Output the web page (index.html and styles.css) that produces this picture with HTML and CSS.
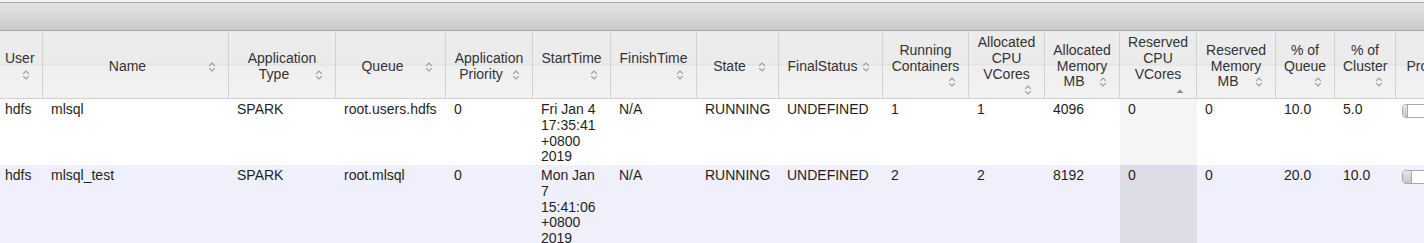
FILE: index.html
```html
<!DOCTYPE html>
<html lang="en">
<head>
<meta charset="utf-8">
<title>Applications</title>
<link rel="stylesheet" href="styles.css">
</head>
<body>
<div class="page">
  <div class="toolbar"></div>
  <div class="scroller">
    <table class="apps">
      <thead>
        <tr>
          <th class="w-user">User<span class="sort"><svg viewBox="0 0 16 16"><path d="M5.2 6.8 8 4 10.8 6.8M5.2 9.2 8 12 10.8 9.2"/></svg></span></th>
          <th class="w-name">Name<span class="sort"><svg viewBox="0 0 16 16"><path d="M5.2 6.8 8 4 10.8 6.8M5.2 9.2 8 12 10.8 9.2"/></svg></span></th>
          <th class="w-type">Application Type<span class="sort"><svg viewBox="0 0 16 16"><path d="M5.2 6.8 8 4 10.8 6.8M5.2 9.2 8 12 10.8 9.2"/></svg></span></th>
          <th class="w-queue">Queue<span class="sort"><svg viewBox="0 0 16 16"><path d="M5.2 6.8 8 4 10.8 6.8M5.2 9.2 8 12 10.8 9.2"/></svg></span></th>
          <th class="w-prio">Application Priority<span class="sort"><svg viewBox="0 0 16 16"><path d="M5.2 6.8 8 4 10.8 6.8M5.2 9.2 8 12 10.8 9.2"/></svg></span></th>
          <th class="w-start">StartTime<span class="sort"><svg viewBox="0 0 16 16"><path d="M5.2 6.8 8 4 10.8 6.8M5.2 9.2 8 12 10.8 9.2"/></svg></span></th>
          <th class="w-finish">FinishTime<span class="sort"><svg viewBox="0 0 16 16"><path d="M5.2 6.8 8 4 10.8 6.8M5.2 9.2 8 12 10.8 9.2"/></svg></span></th>
          <th class="w-state">State<span class="sort"><svg viewBox="0 0 16 16"><path d="M5.2 6.8 8 4 10.8 6.8M5.2 9.2 8 12 10.8 9.2"/></svg></span></th>
          <th class="w-final">FinalStatus<span class="sort"><svg viewBox="0 0 16 16"><path d="M5.2 6.8 8 4 10.8 6.8M5.2 9.2 8 12 10.8 9.2"/></svg></span></th>
          <th class="w-run">Running Containers<span class="sort"><svg viewBox="0 0 16 16"><path d="M5.2 6.8 8 4 10.8 6.8M5.2 9.2 8 12 10.8 9.2"/></svg></span></th>
          <th class="w-acpu">Allocated CPU VCores<span class="sort"><svg viewBox="0 0 16 16"><path d="M5.2 6.8 8 4 10.8 6.8M5.2 9.2 8 12 10.8 9.2"/></svg></span></th>
          <th class="w-amem">Allocated Memory MB<span class="sort"><svg viewBox="0 0 16 16"><path d="M5.2 6.8 8 4 10.8 6.8M5.2 9.2 8 12 10.8 9.2"/></svg></span></th>
          <th class="w-rcpu">Reserved CPU VCores<span class="sort"><svg viewBox="0 0 16 16"><polygon class="asc" points="4.5,11 8,7.5 11.5,11"/></svg></span></th>
          <th class="w-rmem">Reserved Memory MB<span class="sort"><svg viewBox="0 0 16 16"><path d="M5.2 6.8 8 4 10.8 6.8M5.2 9.2 8 12 10.8 9.2"/></svg></span></th>
          <th class="w-pq">% of Queue<span class="sort"><svg viewBox="0 0 16 16"><path d="M5.2 6.8 8 4 10.8 6.8M5.2 9.2 8 12 10.8 9.2"/></svg></span></th>
          <th class="w-pc">% of Cluster<span class="sort"><svg viewBox="0 0 16 16"><path d="M5.2 6.8 8 4 10.8 6.8M5.2 9.2 8 12 10.8 9.2"/></svg></span></th>
          <th class="w-prog">Progress<span class="sort"><svg viewBox="0 0 16 16"><path d="M5.2 6.8 8 4 10.8 6.8M5.2 9.2 8 12 10.8 9.2"/></svg></span></th>
        </tr>
      </thead>
      <tbody>
        <tr class="odd">
          <td>hdfs</td>
          <td>mlsql</td>
          <td>SPARK</td>
          <td>root.users.hdfs</td>
          <td>0</td>
          <td>Fri Jan 4 17:35:41 +0800 2019</td>
          <td>N/A</td>
          <td>RUNNING</td>
          <td>UNDEFINED</td>
          <td>1</td>
          <td>1</td>
          <td>4096</td>
          <td class="sorted">0</td>
          <td>0</td>
          <td>10.0</td>
          <td>5.0</td>
          <td class="prog-cell"><div class="progress"><div class="progress-value" style="width:5%"></div></div></td>
        </tr>
        <tr class="even">
          <td>hdfs</td>
          <td>mlsql_test</td>
          <td>SPARK</td>
          <td>root.mlsql</td>
          <td>0</td>
          <td>Mon Jan 7 15:41:06 +0800 2019</td>
          <td>N/A</td>
          <td>RUNNING</td>
          <td>UNDEFINED</td>
          <td>2</td>
          <td>2</td>
          <td>8192</td>
          <td class="sorted">0</td>
          <td>0</td>
          <td>20.0</td>
          <td>10.0</td>
          <td class="prog-cell"><div class="progress"><div class="progress-value" style="width:10%"></div></div></td>
        </tr>
      </tbody>
    </table>
  </div>
</div>
</body>
</html>
```

FILE: styles.css
```css
html, body {
  margin: 0;
  padding: 0;
  background: #ffffff;
  overflow: hidden;
}

.page {
  padding-top: 2px;
  background: #f4f4f4;
  font-family: "Liberation Sans", Arial, Helvetica, sans-serif;
  font-size: 14px;
  color: #222;
}

.toolbar {
  height: 27px;
  border-top: 1px solid #a9a9a9;
  border-bottom: 1px solid #a6a6a6;
  background: linear-gradient(to bottom, #e2e2e2 0%, #d6d6d6 55%, #c9c9c9 100%);
}

.scroller {
  overflow: hidden;
  background: #fff;
}

.apps {
  table-layout: fixed;
  width: 1493px;
  margin-left: -3px;
  border-collapse: separate;
  border-spacing: 0;
}

.apps th {
  box-sizing: border-box;
  height: 68px;
  padding: 4px 8px 0;
  line-height: 15.75px;
  font-weight: normal;
  color: #333;
  text-align: center;
  vertical-align: middle;
  border-right: 1px solid #d2d2d2;
  border-bottom: 1px solid #d0d0d0;
  background: linear-gradient(to bottom, #ececec 0%, #ebebeb 48%, #e4e4e4 50%, #efefef 53%, #f2f2f2 100%);
}

.sort {
  float: right;
  width: 16px;
  height: 15.75px;
}

.sort svg {
  display: block;
  width: 16px;
  height: 16px;
}

.sort path {
  fill: none;
  stroke: #9a9a9a;
  stroke-width: 1.1;
}

.sort .asc {
  fill: #8a8a8a;
}

.w-user { width: 46px; }
.w-name { width: 186px; }
.w-type { width: 107px; }
.w-queue { width: 110px; }
.w-prio { width: 87px; }
.w-start { width: 78px; }
.w-finish { width: 86px; }
.w-state { width: 82px; }
.w-final { width: 104px; }
.w-run { width: 86px; }
.w-acpu { width: 76px; }
.w-amem { width: 75px; }
.w-rcpu { width: 77px; }
.w-rmem { width: 79px; }
.w-pq { width: 59px; }
.w-pc { width: 61px; }
.w-prog { width: 94px; }

.apps td {
  box-sizing: border-box;
  padding: 3px 8px 0;
  line-height: 15.75px;
  vertical-align: top;
  text-align: left;
  color: #1f1f1f;
}

.apps tr.odd td {
  height: 66px;
  background: #ffffff;
}

.apps tr.even td {
  background: #eff0fb;
}

.apps tr.odd td.sorted {
  background: #f5f5f5;
}

.apps tr.even td.sorted {
  background: #dcdde6;
}

.apps td.prog-cell {
  padding-left: 6px;
}

.progress {
  margin-top: 2px;
  height: 12px;
  border: 1px solid #a8a8a8;
  border-radius: 4px;
  background: #ffffff;
  overflow: hidden;
}

.progress-value {
  height: 100%;
  border-right: 1px solid #a8a8a8;
  background: linear-gradient(to bottom, #e8e8e8, #c6c6c6);
}
```
